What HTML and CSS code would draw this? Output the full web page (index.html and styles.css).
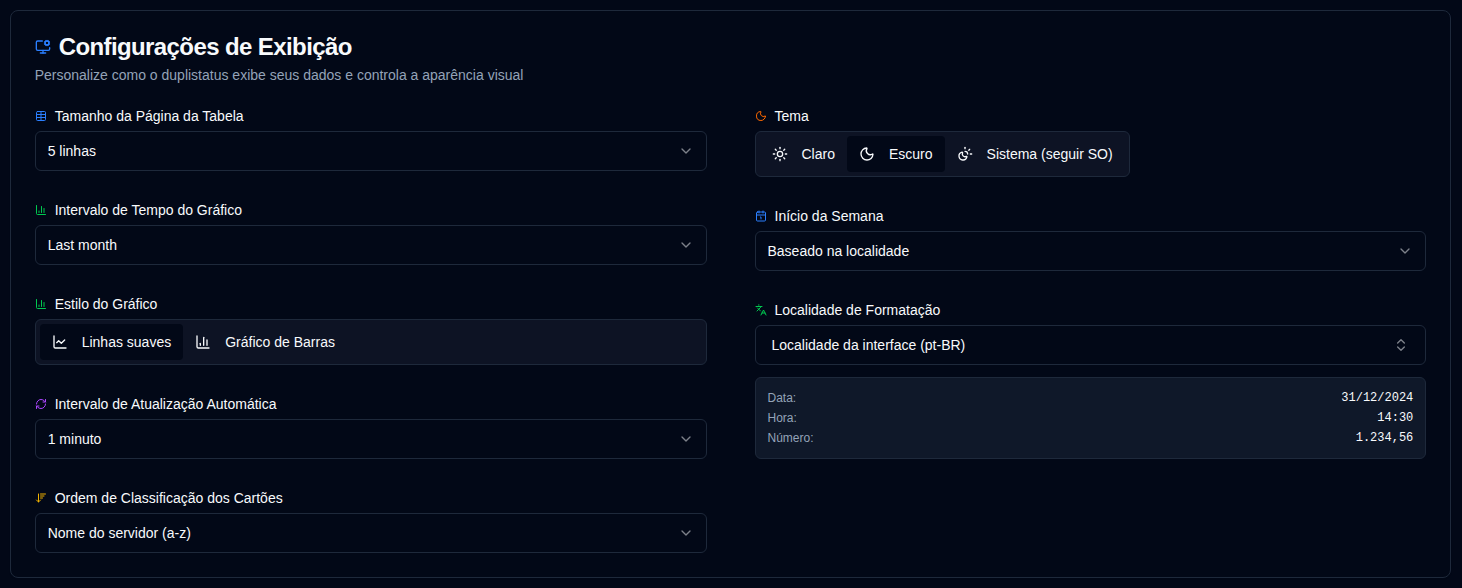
FILE: index.html
```html
<!DOCTYPE html>
<html lang="pt-BR">
<head>
<meta charset="utf-8">
<title>Configurações de Exibição</title>
<link rel="stylesheet" href="styles.css">
</head>
<body>
<main class="card">
  <header class="header">
    <h1 class="title"><svg class="icon blue" viewBox="0 0 24 24"><path d="M12 17v4"/><path d="m14.305 7.53.923-.382"/><path d="m15.228 4.852-.923-.383"/><path d="m16.852 3.228-.383-.924"/><path d="m16.852 8.772-.383.923"/><path d="m19.148 3.228.383-.924"/><path d="m19.53 9.696-.382-.924"/><path d="m20.772 4.852.924-.383"/><path d="m20.772 7.148.924.383"/><path d="M22 13v2a2 2 0 0 1-2 2H4a2 2 0 0 1-2-2V5a2 2 0 0 1 2-2h7"/><path d="M8 21h8"/><circle cx="18" cy="6" r="3"/></svg>Configurações de Exibição</h1>
    <p class="subtitle">Personalize como o duplistatus exibe seus dados e controla a aparência visual</p>
  </header>
  <div class="grid">
    <div class="column">
      <section class="field">
        <div class="label"><svg class="icon small blue" viewBox="0 0 24 24"><path d="M12 3v18"/><rect width="18" height="18" x="3" y="3" rx="2"/><path d="M3 9h18"/><path d="M3 15h18"/></svg>Tamanho da Página da Tabela</div>
        <div class="select"><span>5 linhas</span><svg class="icon chevron" viewBox="0 0 24 24"><path d="m6 9 6 6 6-6"/></svg></div>
      </section>
      <section class="field">
        <div class="label"><svg class="icon small green" viewBox="0 0 24 24"><path d="M3 3v16a2 2 0 0 0 2 2h16"/><path d="M18 17V9"/><path d="M13 17V5"/><path d="M8 17v-3"/></svg>Intervalo de Tempo do Gráfico</div>
        <div class="select"><span>Last month</span><svg class="icon chevron" viewBox="0 0 24 24"><path d="m6 9 6 6 6-6"/></svg></div>
      </section>
      <section class="field">
        <div class="label"><svg class="icon small green" viewBox="0 0 24 24"><path d="M3 3v16a2 2 0 0 0 2 2h16"/><path d="M18 17V9"/><path d="M13 17V5"/><path d="M8 17v-3"/></svg>Estilo do Gráfico</div>
        <div class="toggle">
          <div class="option active"><svg class="icon" viewBox="0 0 24 24"><path d="M3 3v16a2 2 0 0 0 2 2h16"/><path d="m19 9-5 5-4-4-3 3"/></svg>Linhas suaves</div>
          <div class="option"><svg class="icon" viewBox="0 0 24 24"><path d="M3 3v16a2 2 0 0 0 2 2h16"/><path d="M18 17V9"/><path d="M13 17V5"/><path d="M8 17v-3"/></svg>Gráfico de Barras</div>
        </div>
      </section>
      <section class="field">
        <div class="label"><svg class="icon small purple" viewBox="0 0 24 24"><path d="M3 12a9 9 0 0 1 9-9 9.75 9.75 0 0 1 6.74 2.74L21 8"/><path d="M21 3v5h-5"/><path d="M21 12a9 9 0 0 1-9 9 9.75 9.75 0 0 1-6.74-2.74L3 16"/><path d="M8 16H3v5"/></svg>Intervalo de Atualização Automática</div>
        <div class="select"><span>1 minuto</span><svg class="icon chevron" viewBox="0 0 24 24"><path d="m6 9 6 6 6-6"/></svg></div>
      </section>
      <section class="field">
        <div class="label"><svg class="icon small amber" viewBox="0 0 24 24"><path d="m3 16 4 4 4-4"/><path d="M7 20V4"/><path d="M11 4h10"/><path d="M11 8h7"/><path d="M11 12h4"/></svg>Ordem de Classificação dos Cartões</div>
        <div class="select"><span>Nome do servidor (a-z)</span><svg class="icon chevron" viewBox="0 0 24 24"><path d="m6 9 6 6 6-6"/></svg></div>
      </section>
    </div>
    <div class="column">
      <section class="field">
        <div class="label"><svg class="icon small orange" viewBox="0 0 24 24"><path d="M20.985 12.486a9 9 0 1 1-9.473-9.472c.405-.022.617.46.402.803a6 6 0 0 0 8.268 8.268c.344-.215.825-.004.803.401"/></svg>Tema</div>
        <div class="toggle fit">
          <div class="option"><svg class="icon" viewBox="0 0 24 24"><circle cx="12" cy="12" r="4"/><path d="M12 2v2"/><path d="M12 20v2"/><path d="m4.93 4.93 1.41 1.41"/><path d="m17.66 17.66 1.41 1.41"/><path d="M2 12h2"/><path d="M20 12h2"/><path d="m6.34 17.66-1.41 1.41"/><path d="m19.07 4.93-1.41 1.41"/></svg>Claro</div>
          <div class="option active"><svg class="icon" viewBox="0 0 24 24"><path d="M20.985 12.486a9 9 0 1 1-9.473-9.472c.405-.022.617.46.402.803a6 6 0 0 0 8.268 8.268c.344-.215.825-.004.803.401"/></svg>Escuro</div>
          <div class="option"><svg class="icon" viewBox="0 0 24 24"><path d="M12 2v2"/><path d="M14.837 16.385a6 6 0 1 1-7.223-7.222c.624-.147.97.66.715 1.248a4 4 0 0 0 5.26 5.259c.589-.255 1.396.09 1.248.715"/><path d="M16 12a4 4 0 0 0-4-4"/><path d="m19 5-1.256 1.256"/><path d="M20 12h2"/></svg>Sistema (seguir SO)</div>
        </div>
      </section>
      <section class="field">
        <div class="label"><svg class="icon small blue" viewBox="0 0 24 24"><path d="M11 14h1v4"/><path d="M16 2v4"/><path d="M3 10h18"/><path d="M8 2v4"/><rect x="3" y="4" width="18" height="18" rx="2"/></svg>Início da Semana</div>
        <div class="select"><span>Baseado na localidade</span><svg class="icon chevron" viewBox="0 0 24 24"><path d="m6 9 6 6 6-6"/></svg></div>
      </section>
      <section class="field">
        <div class="label"><svg class="icon small green" viewBox="0 0 24 24"><path d="m5 8 6 6"/><path d="m4 14 6-6 2-3"/><path d="M2 5h12"/><path d="M7 2h1"/><path d="m22 22-5-10-5 10"/><path d="M14 18h6"/></svg>Localidade de Formatação</div>
        <div class="select combo"><span>Localidade da interface (pt-BR)</span><svg class="icon chevron" viewBox="0 0 24 24"><path d="m7 15 5 5 5-5"/><path d="m7 9 5-5 5 5"/></svg></div>
        <dl class="preview">
          <div class="row"><dt>Data:</dt><dd>31/12/2024</dd></div>
          <div class="row"><dt>Hora:</dt><dd>14:30</dd></div>
          <div class="row"><dt>Número:</dt><dd>1.234,56</dd></div>
        </dl>
      </section>
    </div>
  </div>
</main>
</body>
</html>
```
FILE: styles.css
```css
* { box-sizing: border-box; margin: 0; }
body {
  padding: 10px 10.7px 10px 9.7px;
  background: #020817;
  color: #f8fafc;
  font: 14px/20px "Liberation Sans", Arial, sans-serif;
}
.card {
  height: 568px;
  padding: 24px;
  border: 1px solid #1e293b;
  border-radius: 8px;
  background: #020817;
  box-shadow: 0 1px 2px rgba(0, 0, 0, 0.05);
}
.header { display: flex; flex-direction: column; gap: 6px; margin-bottom: 24px; }
.title {
  display: flex;
  align-items: center;
  gap: 8px;
  font-size: 24px;
  line-height: 24px;
  font-weight: 700;
  letter-spacing: -0.6px;
}
.subtitle { color: #94a3b8; }
.grid { display: grid; grid-template-columns: 1fr 1fr; gap: 48px; }
.column { display: flex; flex-direction: column; gap: 32px; }
.field { display: flex; flex-direction: column; }
.label { display: flex; align-items: center; gap: 8px; margin-bottom: 8px; line-height: 14px; }
.icon {
  width: 16px;
  height: 16px;
  flex: none;
  fill: none;
  stroke: currentColor;
  stroke-width: 2;
  stroke-linecap: round;
  stroke-linejoin: round;
}
.small { width: 12px; height: 12px; }
.blue { color: #2b7fff; }
.green { color: #00c950; }
.purple { color: #ad46ff; }
.amber { color: #f0b100; }
.orange { color: #ff6900; }
.select {
  display: flex;
  align-items: center;
  justify-content: space-between;
  height: 40px;
  padding: 0 12px;
  border: 1px solid #1e293b;
  border-radius: 6px;
}
.combo { padding: 0 16px; }
.chevron { opacity: 0.5; }
.toggle {
  display: flex;
  height: 46px;
  padding: 4px;
  border: 1px solid #1e293b;
  border-radius: 6px;
  background: #0d1324;
}
.fit { align-self: flex-start; }
.option { display: flex; align-items: center; gap: 14px; padding: 0 12px; border-radius: 4px; }
.active { background: #020817; }
.preview {
  display: flex;
  flex-direction: column;
  gap: 4px;
  margin-top: 12px;
  padding: 12px;
  border: 1px solid #1e293b;
  border-radius: 6px;
  background: #0f1829;
  font-size: 12px;
  line-height: 16px;
}
.row { display: flex; justify-content: space-between; }
.row dt { color: #94a3b8; }
.row dd { font-family: "Liberation Mono", monospace; }
```
